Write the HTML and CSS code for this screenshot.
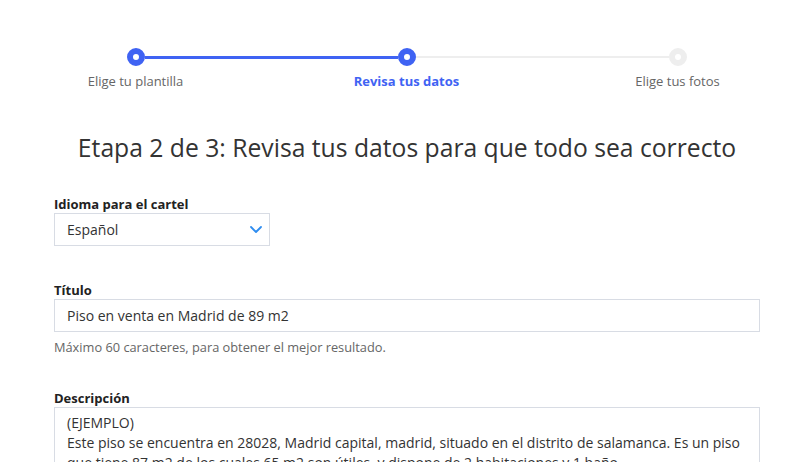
FILE: index.html
```html
<!DOCTYPE html>
<html lang="es">
<head>
    <meta charset="UTF-8">
    <meta name="viewport" content="width=device-width, initial-scale=1.0">
    <title>Cartel - Etapa 2</title>
    <link rel="stylesheet" href="styles.css">
</head>
<body>
    <div class="page">
        <div class="steps">
            <div class="track">
                <span class="dot done"></span>
                <span class="bar done"></span>
                <span class="dot done"></span>
                <span class="bar"></span>
                <span class="dot"></span>
            </div>
            <div class="stepLabels">
                <span>Elige tu plantilla</span>
                <span class="current">Revisa tus datos</span>
                <span>Elige tus fotos</span>
            </div>
        </div>

        <h1 class="titulo">Etapa 2 de 3: Revisa tus datos para que todo sea correcto</h1>

        <div class="campo">
            <label>Idioma para el cartel</label>
            <div class="select">
                <span>Español</span>
                <svg width="12" height="7" viewBox="0 0 12 7"><path d="M1 1 L6 6 L11 1" fill="none" stroke="#2f8df0" stroke-width="1.8" stroke-linecap="round" stroke-linejoin="round"/></svg>
            </div>
        </div>

        <div class="campo">
            <label for="titulo">Título</label>
            <input type="text" id="titulo" value="Piso en venta en Madrid de 89 m2">
            <p class="ayuda">Máximo 60 caracteres, para obtener el mejor resultado.</p>
        </div>

        <div class="campo">
            <label for="descripcion">Descripción</label>
            <textarea id="descripcion">(EJEMPLO)
Este piso se encuentra en 28028, Madrid capital, madrid, situado en el distrito de salamanca. Es un piso que tiene 87 m2 de los cuales 65 m2 son útiles, y dispone de 2 habitaciones y 1 baño.</textarea>
        </div>
    </div>
</body>
</html>
```

FILE: styles.css
```css
body {
    margin: 0;
    overflow: hidden;
    background: #ffffff;
    color: #333333;
    font-family: "Open Sans", Arial, sans-serif;
}

.page {
    width: 706px;
    margin-left: 54px;
    padding-top: 48px;
}

.steps {
    width: 813px;
    margin-left: -54px;
}

.track {
    display: flex;
    align-items: center;
    padding: 0 126px 0 127px;
}

.dot {
    width: 18px;
    height: 18px;
    box-sizing: border-box;
    border-radius: 50%;
    border: 6px solid #eeeeee;
    background: #ffffff;
}

.dot.done {
    border-color: #3f63f3;
}

.bar {
    flex: 1;
    height: 2px;
    background: #eeeeee;
}

.bar.done {
    height: 3px;
    background: #3f63f3;
}

.stepLabels {
    display: grid;
    grid-template-columns: repeat(3, 1fr);
    text-align: center;
    margin-top: 6px;
    font-size: 13px;
    line-height: 18px;
    color: #666666;
}

.stepLabels .current {
    color: #3f63f3;
    font-weight: 700;
}

.titulo {
    margin: 42px 0 31px;
    text-align: center;
    font-size: 24.7px;
    line-height: 32px;
    font-weight: 400;
    color: #333333;
}

.campo {
    margin-bottom: 35px;
}

.campo label {
    display: block;
    font-size: 13px;
    line-height: 18px;
    font-weight: 700;
    color: #222222;
}

.select {
    width: 216px;
    height: 33px;
    box-sizing: border-box;
    display: flex;
    align-items: center;
    justify-content: space-between;
    padding: 0 7px 0 12px;
    border: 1px solid #d8dce4;
    font-size: 14px;
    color: #333333;
}

.campo input,
.campo textarea {
    display: block;
    width: 100%;
    box-sizing: border-box;
    border: 1px solid #d8dce4;
    border-radius: 0;
    font-family: "Open Sans", Arial, sans-serif;
    font-size: 14px;
    color: #333333;
    margin: 0;
}

.campo input {
    height: 33px;
    padding: 0 12px;
}

.campo textarea {
    height: 120px;
    padding: 5px 12px;
    line-height: 20px;
    resize: none;
}

.ayuda {
    margin: 6px 0 0;
    font-size: 12.8px;
    line-height: 18px;
    color: #666666;
}

.campo:has(.ayuda) {
    margin-bottom: 33px;
}
```
